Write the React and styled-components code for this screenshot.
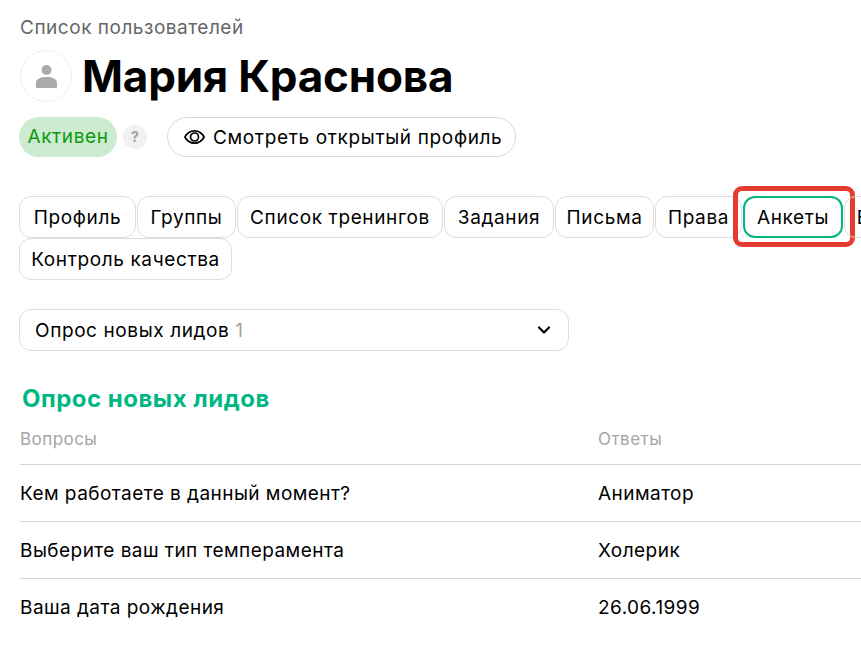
import React from 'react';
import styled, { createGlobalStyle } from 'styled-components';
import { ChevronDown } from 'lucide-react';

const tabs = [
    { label: 'Профиль', width: 117 },
    { label: 'Группы', width: 99 },
    { label: 'Список тренингов', width: 206 },
    { label: 'Задания', width: 110 },
    { label: 'Письма', width: 99 },
    { label: 'Права', width: 87 },
    { label: 'Анкеты', width: 100, active: true },
    { label: 'Вебинары', width: 124 },
    { label: 'Контроль качества', width: 213 },
];

const rows = [
    ['Кем работаете в данный момент?', 'Аниматор'],
    ['Выберите ваш тип темперамента', 'Холерик'],
    ['Ваша дата рождения', '26.06.1999'],
];

const App = () => {
    return (
        <Page>
            <GlobalStyle />
            <Breadcrumb>Список пользователей</Breadcrumb>
            <TitleRow>
                <Avatar>
                    <svg width="21" height="23" viewBox="0 0 21 23">
                        <circle cx="10.5" cy="5" r="5" fill="#aaaaaa" />
                        <path d="M0 23v-5.5C0 14 5 12 10.5 12S21 14 21 17.5V23z" fill="#aaaaaa" />
                    </svg>
                </Avatar>
                <Title>Мария Краснова</Title>
            </TitleRow>
            <StatusRow>
                <Status>Активен</Status>
                <Hint>?</Hint>
                <ProfileButton>
                    <svg width="21" height="14" viewBox="0 0 21 14" fill="none" stroke="#000000" strokeWidth="1.7">
                        <path d="M0.9 7C3 3 6.5 0.9 10.5 0.9S18 3 20.1 7C18 11 14.5 13.1 10.5 13.1S3 11 0.9 7Z" />
                        <circle cx="10.5" cy="7" r="4" />
                    </svg>
                    Смотреть открытый профиль
                </ProfileButton>
            </StatusRow>
            <Tabs>
                {tabs.map((tab) => (
                    <Tab key={tab.label} $active={tab.active} $width={tab.width}>{tab.label}</Tab>
                ))}
            </Tabs>
            <Select>
                <span>Опрос новых лидов <Count>1</Count></span>
                <ChevronDown size={20} strokeWidth={2.6} />
            </Select>
            <SurveyTitle>Опрос новых лидов</SurveyTitle>
            <HeadRow>
                <span>Вопросы</span>
                <span>Ответы</span>
            </HeadRow>
            {rows.map(([question, answer]) => (
                <Row key={question}>
                    <span>{question}</span>
                    <span>{answer}</span>
                </Row>
            ))}
        </Page>
    );
}

export default App;

const GlobalStyle = createGlobalStyle`
    html, body {
        margin: 0;
        height: 100%;
        overflow: hidden;
        background: #ffffff;
    }

    body {
        font-family: Inter, "Noto Sans", sans-serif;
        font-size: 19px;
        letter-spacing: 0.45px;
        color: #000000;
    }

    * {
        box-sizing: border-box;
    }
`;

const Page = styled.div`
    width: 1040px;
    padding: 15px 0 0 19px;
`;

const Breadcrumb = styled.div`
    margin-left: 1px;
    line-height: 26px;
    letter-spacing: 0.52px;
    color: #666666;
`;

const TitleRow = styled.div`
    display: flex;
    align-items: center;
    gap: 10px;
    margin: 9px 0 0 1px;
`;

const Avatar = styled.div`
    width: 52px;
    height: 52px;
    border-radius: 50%;
    border: 1px solid #eeeeee;
    display: flex;
    align-items: center;
    justify-content: center;
`;

const Title = styled.h1`
    margin: 0;
    font-size: 44px;
    line-height: 52px;
    font-weight: 700;
    letter-spacing: -0.2px;
`;

const StatusRow = styled.div`
    display: flex;
    align-items: center;
    margin-top: 15px;
`;

const Status = styled.div`
    width: 98px;
    height: 40px;
    border-radius: 20px;
    background: #cdebd0;
    color: #0a9a0e;
    letter-spacing: 0.6px;
    line-height: 40px;
    text-align: center;
`;

const Hint = styled.div`
    width: 24px;
    height: 24px;
    margin-left: 6px;
    border-radius: 50%;
    background: #f1f1f1;
    color: #a0a0a8;
    font-size: 14px;
    font-weight: 700;
    letter-spacing: 0;
    line-height: 24px;
    text-align: center;
`;

const ProfileButton = styled.div`
    display: flex;
    align-items: center;
    gap: 8px;
    width: 349px;
    height: 40px;
    margin-left: 20px;
    padding-left: 16px;
    border: 1px solid #d9d9d9;
    border-radius: 20px;
    letter-spacing: 0.65px;
`;

const Tabs = styled.div`
    display: flex;
    flex-wrap: wrap;
    gap: 0 1px;
    width: 960px;
    margin-top: 39px;
`;

const Tab = styled.div`
    position: relative;
    width: ${(props) => props.$width}px;
    height: 42px;
    border: ${(props) => (props.$active ? '2px solid #00b783' : '1px solid #dddddd')};
    border-radius: 12px;
    letter-spacing: 0.62px;
    line-height: ${(props) => (props.$active ? '40px' : '42px')};
    text-align: center;
    white-space: nowrap;

    ${(props) => props.$active && `
        &::after {
            content: '';
            position: absolute;
            inset: -12px -14px -11px -12px;
            border: 5px solid #e53b30;
            border-radius: 9px;
        }
    `}
`;

const Select = styled.div`
    display: flex;
    align-items: center;
    justify-content: space-between;
    width: 550px;
    height: 42px;
    margin-top: 29px;
    padding: 0 14px 0 15px;
    border: 1px solid #dddddd;
    border-radius: 12px;
    letter-spacing: 0.6px;
`;

const Count = styled.span`
    color: #a5a5a5;
`;

const SurveyTitle = styled.h2`
    margin: 33px 0 0 3px;
    font-size: 24px;
    line-height: 30px;
    font-weight: 700;
    letter-spacing: 0.5px;
    color: #00b783;
`;

const HeadRow = styled.div`
    display: grid;
    grid-template-columns: 578px 1fr;
    height: 51px;
    margin-left: 1px;
    padding-top: 14px;
    border-bottom: 1px solid #d5d5d5;
    font-size: 17px;
    line-height: 22px;
    color: #a5a5a5;
`;

const Row = styled.div`
    display: grid;
    grid-template-columns: 578px 1fr;
    align-items: center;
    height: 57px;
    margin-left: 1px;
    border-bottom: 1px solid #d5d5d5;

    &:last-child {
        border-bottom: none;
    }
`;
